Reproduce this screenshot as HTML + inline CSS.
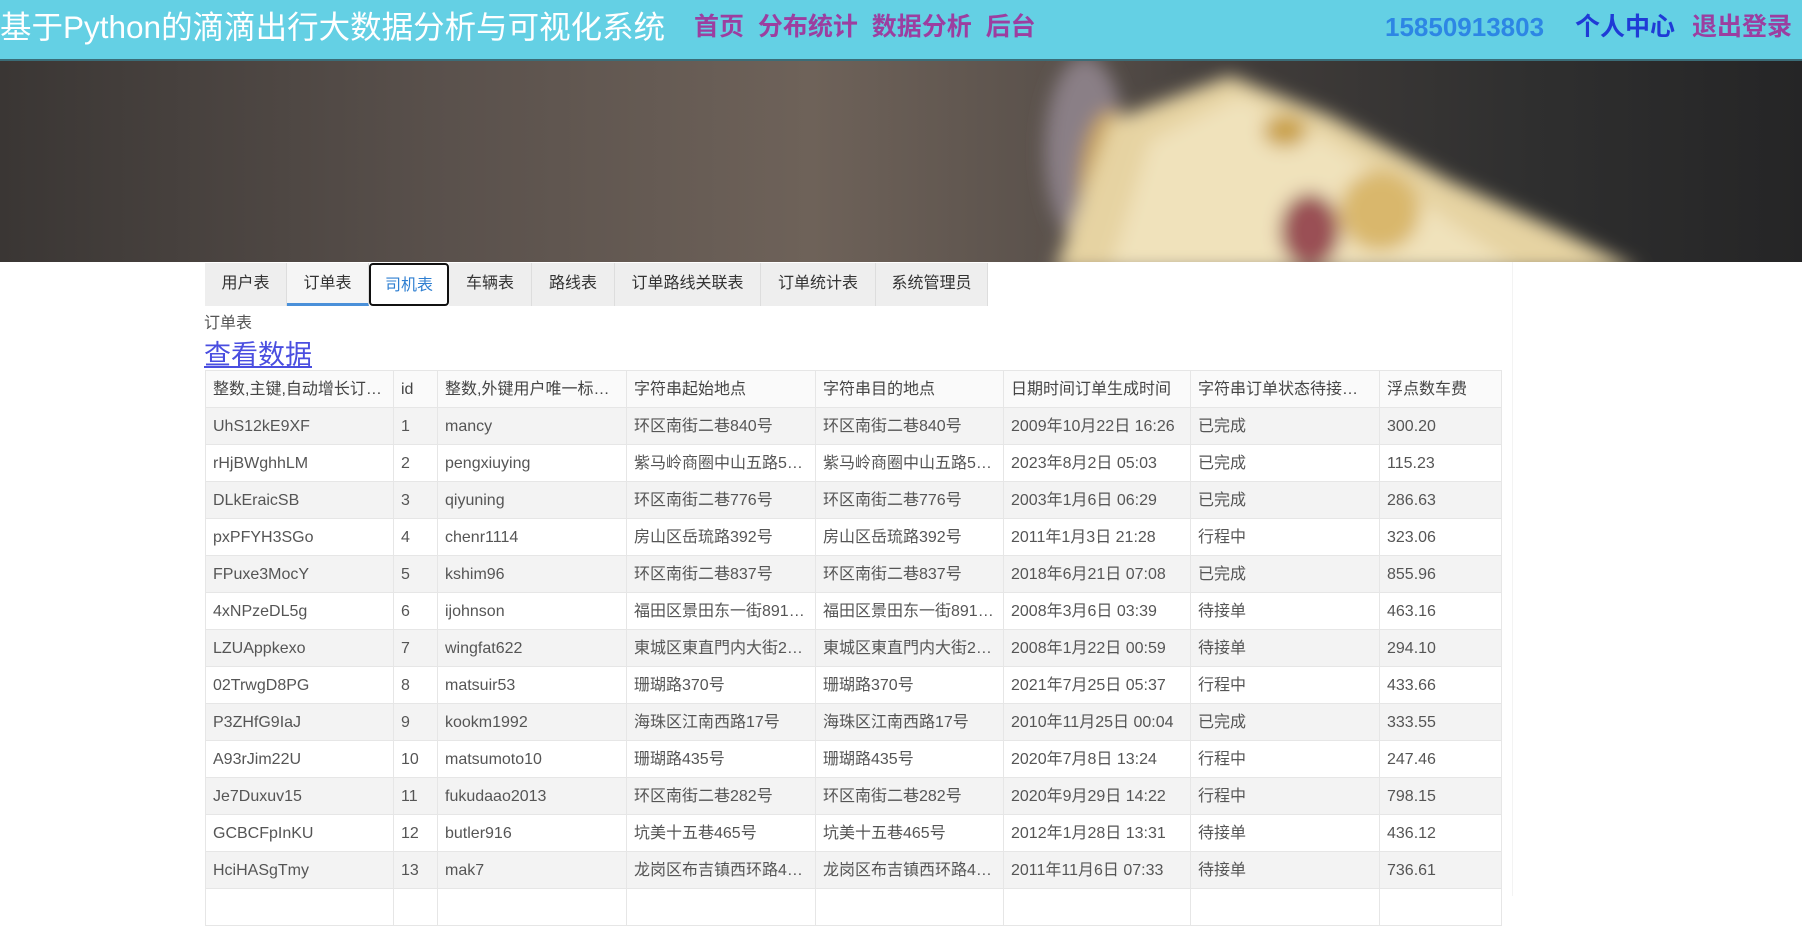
<!DOCTYPE html>
<html><head><meta charset="utf-8"><style>
*{margin:0;padding:0;box-sizing:border-box}
body{width:1802px;height:896px;overflow:hidden;background:#fff;font-family:"Liberation Sans","Noto Sans CJK SC",sans-serif;position:relative}
.hd{position:absolute;left:0;top:0;width:1802px;height:61px;background:#64d0e4;border-bottom:2px solid #3a6d78}
.hd span{position:absolute;top:0;line-height:54px;white-space:nowrap}
.ban{position:absolute;left:0;top:61px;width:1802px;height:201px;overflow:hidden;background:linear-gradient(90deg,#3a3634 0%,#5a514c 25%,#6e6259 45%,#5b524c 58%,#3f3b39 70%,#2f2f2f 85%,#252526 100%)}
.tabs{position:absolute;top:263px;left:205px;height:43px;display:flex}
.tab{height:43px;background:#eeeeee;border-right:1px solid #ddd;font-size:16px;color:#333;text-align:center;line-height:41px}
table{position:absolute;left:205px;top:370px;border-collapse:collapse;table-layout:fixed;width:1296px;font-size:16px;color:#555}
td{height:37px;line-height:35px;vertical-align:middle;border:1px solid #e6e6e6;padding:0 7px;white-space:nowrap;overflow:hidden;text-overflow:ellipsis}
tr:nth-child(even) td{background:#f3f3f3}
tr:first-child td{background:#fafafa;color:#444}
</style></head><body>
<div class="hd">
<span style="left:0;font-size:31.5px;color:#fff">基于Python的滴滴出行大数据分析与可视化系统</span>
<span style="left:694px;font-size:25px;font-weight:bold;color:#9c3ea0">首页&nbsp;&nbsp;分布统计&nbsp;&nbsp;数据分析&nbsp;&nbsp;后台</span>
<span style="left:1385px;font-size:26px;font-weight:bold;color:#2d86e4">15850913803</span>
<span style="left:1575px;font-size:25px;font-weight:bold;color:#1f3bd6">个人中心</span>
<span style="left:1692px;font-size:25px;font-weight:bold;color:#9c3ea0">退出登录</span>
</div>
<div class="ban"><svg width="1802" height="201"><defs><filter id="b"><feGaussianBlur stdDeviation="9"/></filter></defs>
<g filter="url(#b)">
<ellipse cx="1085" cy="90" rx="40" ry="95" fill="#8a7f86"/>
<ellipse cx="1110" cy="130" rx="30" ry="80" fill="#c9a25a"/>
<polygon points="1055,210 1110,60 1230,15 1330,55 1450,120 1560,170 1640,210" fill="#e6d3a2"/>
<polygon points="1110,210 1150,80 1240,35 1330,80 1420,140 1520,210" fill="#f0e2bb"/>
<ellipse cx="1310" cy="170" rx="30" ry="38" fill="#9a5055"/>
<ellipse cx="1285" cy="70" rx="22" ry="16" fill="#c9a046"/>
<ellipse cx="1380" cy="150" rx="40" ry="40" fill="#d9b76c"/>
</g></svg></div>
<div class="tabs">
<div class="tab" style="width:82px">用户表</div>
<div class="tab" style="width:82px;background:#f5f5f5;border-bottom:3px solid #4a90d9">订单表</div>
<div class="tab" style="width:80px;background:#fff;border:2px solid #111;border-radius:4px;color:#2f7fd1">司机表</div>
<div class="tab" style="width:83px">车辆表</div>
<div class="tab" style="width:83px">路线表</div>
<div class="tab" style="width:146px">订单路线关联表</div>
<div class="tab" style="width:115px">订单统计表</div>
<div class="tab" style="width:112px">系统管理员</div>
</div>
<div style="position:absolute;left:204px;top:309px;font-size:16px;color:#555">订单表</div>
<div style="position:absolute;left:204px;top:333px;font-size:27px;color:#4a4ee0;text-decoration:underline">查看数据</div>
<div style="position:absolute;left:1512px;top:262px;width:1px;height:634px;background:#f3f3f3"></div>
<table>
<colgroup><col style="width:188px"><col style="width:44px"><col style="width:189px"><col style="width:189px"><col style="width:188px"><col style="width:187px"><col style="width:189px"><col style="width:122px"></colgroup>
<tr><td>整数,主键,自动增长订…</td><td>id</td><td>整数,外键用户唯一标…</td><td>字符串起始地点</td><td>字符串目的地点</td><td>日期时间订单生成时间</td><td>字符串订单状态待接…</td><td>浮点数车费</td></tr>
<tr><td>UhS12kE9XF</td><td>1</td><td>mancy</td><td>环区南街二巷840号</td><td>环区南街二巷840号</td><td>2009年10月22日 16:26</td><td>已完成</td><td>300.20</td></tr>
<tr><td>rHjBWghhLM</td><td>2</td><td>pengxiuying</td><td>紫马岭商圈中山五路5…</td><td>紫马岭商圈中山五路5…</td><td>2023年8月2日 05:03</td><td>已完成</td><td>115.23</td></tr>
<tr><td>DLkEraicSB</td><td>3</td><td>qiyuning</td><td>环区南街二巷776号</td><td>环区南街二巷776号</td><td>2003年1月6日 06:29</td><td>已完成</td><td>286.63</td></tr>
<tr><td>pxPFYH3SGo</td><td>4</td><td>chenr1114</td><td>房山区岳琉路392号</td><td>房山区岳琉路392号</td><td>2011年1月3日 21:28</td><td>行程中</td><td>323.06</td></tr>
<tr><td>FPuxe3MocY</td><td>5</td><td>kshim96</td><td>环区南街二巷837号</td><td>环区南街二巷837号</td><td>2018年6月21日 07:08</td><td>已完成</td><td>855.96</td></tr>
<tr><td>4xNPzeDL5g</td><td>6</td><td>ijohnson</td><td>福田区景田东一街891…</td><td>福田区景田东一街891…</td><td>2008年3月6日 03:39</td><td>待接单</td><td>463.16</td></tr>
<tr><td>LZUAppkexo</td><td>7</td><td>wingfat622</td><td>東城区東直門内大街2…</td><td>東城区東直門内大街2…</td><td>2008年1月22日 00:59</td><td>待接单</td><td>294.10</td></tr>
<tr><td>02TrwgD8PG</td><td>8</td><td>matsuir53</td><td>珊瑚路370号</td><td>珊瑚路370号</td><td>2021年7月25日 05:37</td><td>行程中</td><td>433.66</td></tr>
<tr><td>P3ZHfG9IaJ</td><td>9</td><td>kookm1992</td><td>海珠区江南西路17号</td><td>海珠区江南西路17号</td><td>2010年11月25日 00:04</td><td>已完成</td><td>333.55</td></tr>
<tr><td>A93rJim22U</td><td>10</td><td>matsumoto10</td><td>珊瑚路435号</td><td>珊瑚路435号</td><td>2020年7月8日 13:24</td><td>行程中</td><td>247.46</td></tr>
<tr><td>Je7Duxuv15</td><td>11</td><td>fukudaao2013</td><td>环区南街二巷282号</td><td>环区南街二巷282号</td><td>2020年9月29日 14:22</td><td>行程中</td><td>798.15</td></tr>
<tr><td>GCBCFpInKU</td><td>12</td><td>butler916</td><td>坑美十五巷465号</td><td>坑美十五巷465号</td><td>2012年1月28日 13:31</td><td>待接单</td><td>436.12</td></tr>
<tr><td>HciHASgTmy</td><td>13</td><td>mak7</td><td>龙岗区布吉镇西环路4…</td><td>龙岗区布吉镇西环路4…</td><td>2011年11月6日 07:33</td><td>待接单</td><td>736.61</td></tr>
<tr><td>&nbsp;</td><td></td><td></td><td></td><td></td><td></td><td></td><td></td></tr>
</table>
</body></html>
